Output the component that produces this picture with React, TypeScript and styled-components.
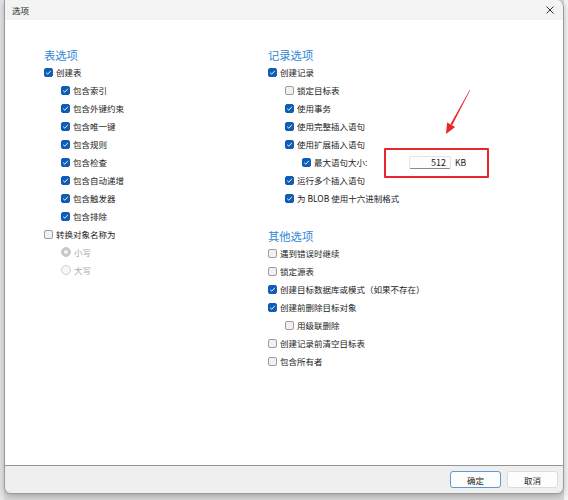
import { FC, ReactNode } from 'react';
import styled, { createGlobalStyle } from 'styled-components';

const GlobalStyle = createGlobalStyle`
  html, body {
    margin: 0;
    padding: 0;
    background: #d6d6d6;
    font-family: 'Noto Sans CJK SC', 'Noto Sans', 'Liberation Sans', sans-serif;
  }
`;

const Desktop = styled.div`
  width: 568px;
  height: 500px;
  box-sizing: border-box;
  padding: 0 4px 6px 4px;
  display: flex;
  background: linear-gradient(90deg, #e4e4e4 0 4px, #d8d8d8 4px, #d8d8d8 564px, #f4f4f4 564px);
`;

const Dialog = styled.div`
  flex: 1;
  display: flex;
  flex-direction: column;
  border: 1px solid #9a9a9a;
  border-top: none;
  border-radius: 0 7px 7px 7px;
  overflow: hidden;
  box-shadow: 0 2px 6px rgba(0, 0, 0, 0.25);
`;

const TitleBar = styled.div`
  height: 20px;
  flex-shrink: 0;
  display: flex;
  align-items: center;
  justify-content: space-between;
  padding: 0 9px 0 7px;
  background: #f3f3f3;
  font-size: 8.5px;
  color: #1b1b1b;
`;

const Content = styled.div`
  position: relative;
  flex: 1;
  display: grid;
  grid-template-columns: 224px 1fr;
  align-content: start;
  padding: 26px 0 0 39px;
  background: #ffffff;
`;

const Column = styled.div`
  display: flex;
  flex-direction: column;
`;

const Heading = styled.div<{ $gap?: number }>`
  height: 18px;
  line-height: 18px;
  margin-top: ${(p) => p.$gap ?? 0}px;
  font-size: 11.3px;
  color: #2f86d6;
  margin-bottom: -1px;
`;

const Row = styled.div<{ $indent: number }>`
  position: relative;
  height: 18px;
  display: flex;
  align-items: center;
  padding-left: ${(p) => p.$indent}px;
  font-size: 8.5px;
  color: #1b1b1b;
`;

const Option = styled.label<{ $width?: number; $disabled?: boolean }>`
  display: flex;
  align-items: center;
  gap: 3px;
  width: ${(p) => (p.$width ? `${p.$width}px` : 'auto')};
  color: ${(p) => (p.$disabled ? '#a8a8a8' : '#1b1b1b')};
  white-space: nowrap;
`;

const Box = styled.span<{ $checked: boolean }>`
  width: 9px;
  height: 9px;
  box-sizing: border-box;
  border-radius: 2px;
  flex-shrink: 0;
  display: flex;
  align-items: center;
  justify-content: center;
  background: ${(p) => (p.$checked ? '#0f5db5' : '#f1f1f1')};
  border: 1px solid ${(p) => (p.$checked ? '#0f5db5' : '#9c9c9c')};
`;

const Radio = styled.span<{ $checked: boolean }>`
  width: 10px;
  height: 10px;
  box-sizing: border-box;
  border-radius: 50%;
  flex-shrink: 0;
  display: flex;
  align-items: center;
  justify-content: center;
  background: ${(p) => (p.$checked ? '#c7c7c7' : '#f7f7f7')};
  border: 1px solid #cdcdcd;

  &::after {
    content: '';
    display: ${(p) => (p.$checked ? 'block' : 'none')};
    width: 4px;
    height: 4px;
    border-radius: 50%;
    background: #f4f4f4;
  }
`;

const SizeField = styled.div`
  position: relative;
  display: flex;
  align-items: center;
  gap: 4px;
`;

const NumberInput = styled.div`
  width: 42px;
  height: 13px;
  box-sizing: border-box;
  padding-right: 4px;
  display: flex;
  align-items: center;
  justify-content: flex-end;
  background: #fdfdfd;
  border: 1px solid #e3e3e3;
  border-bottom-color: #8a8a8a;
  border-radius: 2px;
  font-size: 9px;
`;

const Unit = styled.span`
  font-size: 8.5px;
`;

const Highlight = styled.div`
  position: absolute;
  top: -8px;
  bottom: -9px;
  left: -25px;
  right: -23px;
  border: 2px solid #e8262b;
  border-radius: 1px;
  pointer-events: none;
`;

const Arrow = styled.svg`
  position: absolute;
  left: 436px;
  top: 66px;
`;

const Footer = styled.div`
  height: 27px;
  flex-shrink: 0;
  display: flex;
  align-items: center;
  justify-content: flex-end;
  gap: 6px;
  padding-right: 5px;
  background: #efefef;
  border-top: 1px solid #959595;
`;

const Button = styled.button<{ $primary?: boolean }>`
  width: 51px;
  height: 17px;
  padding: 0;
  box-sizing: border-box;
  font-family: inherit;
  font-size: 8.5px;
  color: #1b1b1b;
  background: #fdfdfd;
  border: 1px solid ${(p) => (p.$primary ? '#5b9ad8' : '#dcdcdc')};
  border-radius: 3px;
`;

type Item = {
  label: ReactNode;
  indent: number;
  checked: boolean;
  kind?: 'box' | 'radio';
  disabled?: boolean;
};

const tableItems: Item[] = [
  { label: '创建表', indent: 0, checked: true },
  { label: '包含索引', indent: 17, checked: true },
  { label: '包含外键约束', indent: 17, checked: true },
  { label: '包含唯一键', indent: 17, checked: true },
  { label: '包含规则', indent: 17, checked: true },
  { label: '包含检查', indent: 17, checked: true },
  { label: '包含自动递增', indent: 17, checked: true },
  { label: '包含触发器', indent: 17, checked: true },
  { label: '包含排除', indent: 17, checked: true },
  { label: '转换对象名称为', indent: 0, checked: false },
  { label: '小写', indent: 17, checked: true, kind: 'radio', disabled: true },
  { label: '大写', indent: 17, checked: false, kind: 'radio', disabled: true },
];

const recordItemsTop: Item[] = [
  { label: '创建记录', indent: 0, checked: true },
  { label: '锁定目标表', indent: 17, checked: false },
  { label: '使用事务', indent: 17, checked: true },
  { label: '使用完整插入语句', indent: 17, checked: true },
  { label: '使用扩展插入语句', indent: 17, checked: true },
];

const recordItemsBottom: Item[] = [
  { label: '运行多个插入语句', indent: 17, checked: true },
  { label: '为 BLOB 使用十六进制格式', indent: 17, checked: true },
];

const otherItems: Item[] = [
  { label: '遇到错误时继续', indent: 0, checked: false },
  { label: '锁定源表', indent: 0, checked: false },
  { label: '创建目标数据库或模式（如果不存在）', indent: 0, checked: true },
  { label: '创建前删除目标对象', indent: 0, checked: true },
  { label: '用级联删除', indent: 17, checked: false },
  { label: '创建记录前清空目标表', indent: 0, checked: false },
  { label: '包含所有者', indent: 0, checked: false },
];

const CheckMark: FC = () => (
  <svg width="7" height="7" viewBox="0 0 7 7">
    <path d="M1.2 3.7 L2.8 5.2 L5.9 1.8" fill="none" stroke="#fff" strokeWidth="0.9" />
  </svg>
);

const OptionRow: FC<{ item: Item }> = ({ item }) => (
  <Row $indent={item.indent}>
    <Option $disabled={item.disabled}>
      {item.kind === 'radio' ? (
        <Radio $checked={item.checked} />
      ) : (
        <Box $checked={item.checked}>{item.checked && <CheckMark />}</Box>
      )}
      {item.label}
    </Option>
  </Row>
);

const CloseIcon: FC = () => (
  <svg width="8" height="8" viewBox="0 0 8 8">
    <path d="M0.5 0.5 L7.5 7.5 M7.5 0.5 L0.5 7.5" stroke="#1b1b1b" strokeWidth="0.9" />
  </svg>
);

const App: FC = () => {
  return (
    <Desktop>
      <GlobalStyle />
      <Dialog>
        <TitleBar>
          <span>选项</span>
          <CloseIcon />
        </TitleBar>
        <Content>
          <Column>
            <Heading>表选项</Heading>
            {tableItems.map((item, i) => (
              <OptionRow key={i} item={item} />
            ))}
          </Column>
          <Column>
            <Heading>记录选项</Heading>
            {recordItemsTop.map((item, i) => (
              <OptionRow key={i} item={item} />
            ))}
            <Row $indent={34}>
              <Option $width={107}>
                <Box $checked>
                  <CheckMark />
                </Box>
                最大语句大小:
              </Option>
              <SizeField>
                <NumberInput>512</NumberInput>
                <Unit>KB</Unit>
                <Highlight />
              </SizeField>
            </Row>
            {recordItemsBottom.map((item, i) => (
              <OptionRow key={i} item={item} />
            ))}
            <Heading $gap={20}>其他选项</Heading>
            {otherItems.map((item, i) => (
              <OptionRow key={i} item={item} />
            ))}
          </Column>
          <Arrow width="40" height="52" viewBox="0 0 40 52">
            <polygon points="29.3,4.1 28.7,3.9 9.4,38.3 11.2,39.3" fill="#e8262b" />
            <polygon points="5,48 6.1,36.6 14.2,41.1" fill="#e8262b" />
          </Arrow>
        </Content>
        <Footer>
          <Button $primary>确定</Button>
          <Button>取消</Button>
        </Footer>
      </Dialog>
    </Desktop>
  );
};

export default App;
